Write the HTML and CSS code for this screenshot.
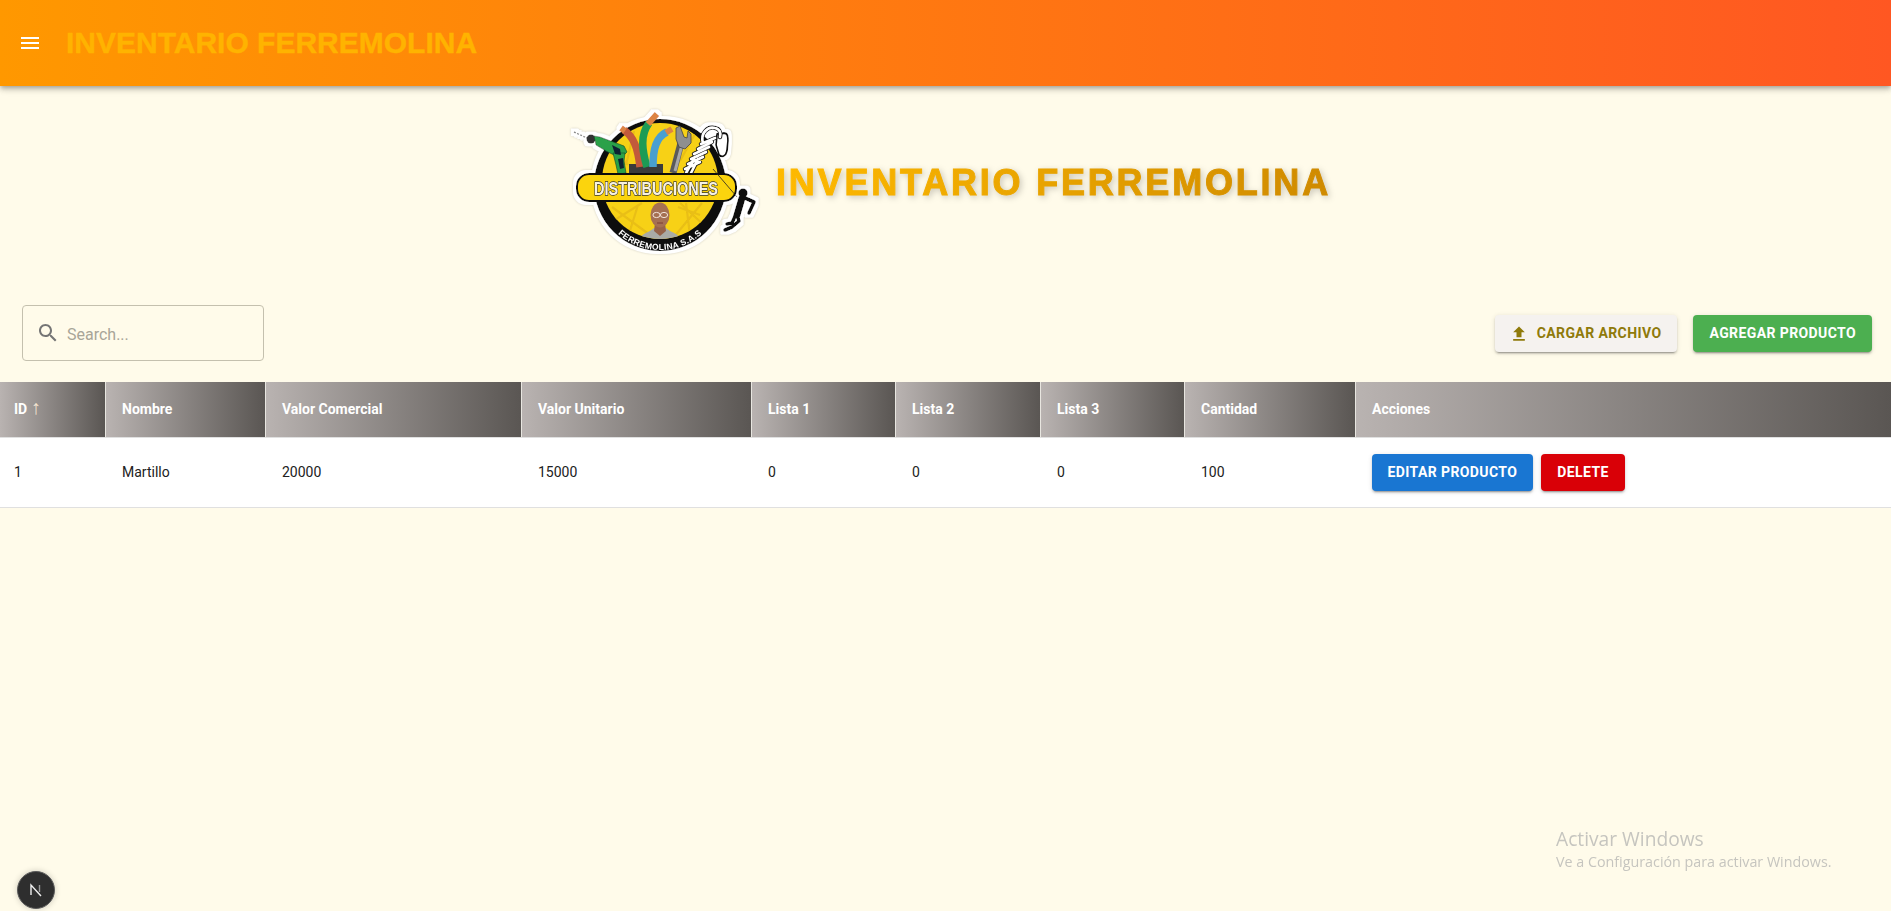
FILE: index.html
```html
<!DOCTYPE html>
<html lang="es">
<head>
<meta charset="utf-8">
<title>Inventario Ferremolina</title>
<link rel="stylesheet" href="styles.css">
</head>
<body>
<header class="appbar">
  <button class="menu-btn" aria-label="menu">
    <svg class="icon24" viewBox="0 0 24 24"><path d="M3 18h18v-2H3v2zm0-5h18v-2H3v2zm0-7v2h18V6H3z"/></svg>
  </button>
  <div class="appbar-title">INVENTARIO FERREMOLINA</div>
</header>

<section class="hero">
  <svg class="logo" viewBox="0 0 220 170" aria-label="Distribuciones Ferremolina">
    <defs>
      <path id="arc" d="M 60 130 A 62.5 62.5 0 0 0 160 130"/>
      <clipPath id="inner"><circle cx="110" cy="86" r="58"/></clipPath>
      <filter id="halo" x="-5%" y="-5%" width="110%" height="110%">
        <feMorphology in="SourceAlpha" operator="dilate" radius="3.2" result="grown"/>
        <feGaussianBlur in="grown" stdDeviation=".5" result="soft"/>
        <feFlood flood-color="#fff"/>
        <feComposite in2="soft" operator="in" result="white"/>
        <feMerge><feMergeNode in="white"/><feMergeNode in="SourceGraphic"/></feMerge>
      </filter>
    </defs>
    <g filter="url(#halo)">
      <circle cx="110" cy="90" r="66" fill="#111"/>
      <circle cx="110" cy="86" r="58" fill="#f7d117"/>
      <g clip-path="url(#inner)">
        <path class="rays" d="M62 112 L100 140 M60 128 L92 108 M78 142 L88 110 M130 108 L158 134 M124 142 L152 108 M140 140 L136 108 M150 120 L128 112 M84 36 L76 70 M60 50 L78 70 M130 66 L150 30"/>
        <path class="shirt" d="M88 146 C90 139 100 137 104 133 L116 133 C120 137 130 139 132 146Z"/>
      </g>
      <rect class="wire-base" x="79" y="69" width="34" height="11"/>
      <path class="wire wire-red" d="M90 72 C88 54 84 42 74 35"/>
      <path class="wire wire-green" d="M97 72 C92 55 90 40 99 28"/>
      <path class="wire wire-blue" d="M103 72 C103 54 106 42 117 37"/>
      <path class="wire-tip" d="M75 36 L71 33 M98 29 L107 19 M116 37.5 L122 34"/>
      <path class="wrench" d="M123 78 L131 48"/>
      <path class="wrench-line" d="M125 76 L132 50"/>
      <path class="wrench-head" d="M126 33 L130 31 L134 42 L137 43 L138 36 L141 39 L141 48 L135 54 L129 52 L126 44Z"/>
      <path class="drill-bit" d="M24 37 L37 43"/>
      <circle class="drill-chuck" cx="41" cy="44" r="4.5"/>
      <path class="drill" d="M44 41 L50 42 L74 51 L77 57 L72 62 L64 60 L56 56 L46 50Z"/>
      <path class="drill" d="M63 58 L75 58 L74 66 L76 78 L68 79 L66 70Z"/>
      <path class="drill-dark" d="M62 50 L70 54 L71 60 L65 59Z M68 64 L73 63 L74 73 L70 74Z"/>
      <path class="carabiner" d="M167 39 L174 38 C178 38 178 42 178 46 L177 56 C176 61 172 63 169 60 L166 50Z"/>
      <path class="coil-under" d="M153 48 C150 38 158 31 165 33 C170 34 171 38 170 42 M136 78 L144 64 M141 78 L148 64 M135 74 L150 67 M138 69 L153 62 M141 64 L156 57 M144 59 L159 52 M148 54 L162 47 M151 49 L165 43"/>
      <path class="coil-over" d="M153 48 C150 38 158 31 165 33 C170 34 171 38 170 42 M136 78 L144 64 M141 78 L148 64 M135 74 L150 67 M138 69 L153 62 M141 64 L156 57 M144 59 L159 52 M148 54 L162 47 M151 49 L165 43"/>
      <rect class="banner" x="27" y="79" width="159" height="27" rx="12"/>
      <path class="line" d="M163 74 L187 102"/>
      <text class="banner-text" x="106" y="100" text-anchor="middle" textLength="124" lengthAdjust="spacingAndGlyphs">DISTRIBUCIONES</text>
      <path class="skin-neck" d="M105 128 L115 128 L116 136 L110 141 L104 136Z"/>
      <ellipse class="skin" cx="110" cy="120" rx="9.5" ry="12.5"/>
      <path class="mouth" d="M107 128 H113"/>
      <ellipse class="glasses" cx="106.5" cy="120" rx="3.6" ry="2.6"/>
      <ellipse class="glasses" cx="114" cy="120" rx="3.6" ry="2.6"/>
      <text class="arc-text"><textPath href="#arc" startOffset="50%" text-anchor="middle">FERREMOLINA S.A.S</textPath></text>
      <circle class="climber-fill" cx="193" cy="98" r="4.6"/>
      <path class="climber-body" d="M192 103 L187 120"/>
      <path class="climber-limb" d="M195 103 L204 107 L199 118 M187 120 L189 126 L182 132 L175 135 M186 119 L182 128 L177 129"/>
    </g>
  </svg>
  <h1 class="hero-title">
    <svg class="hero-svg" viewBox="0 0 560 50">
      <defs>
        <linearGradient id="titleGrad" x1="0" y1="0" x2="1" y2="0">
          <stop offset="0" stop-color="#ffba00"/>
          <stop offset="1" stop-color="#cf8a00"/>
        </linearGradient>
      </defs>
      <text class="hero-text" x="0" y="40" fill="url(#titleGrad)" stroke="url(#titleGrad)">INVENTARIO FERREMOLINA</text>
    </svg>
  </h1>
</section>

<section class="toolbar">
  <label class="search">
    <svg class="icon24 search-icon" viewBox="0 0 24 24"><path d="M15.5 14h-.79l-.28-.27C15.41 12.59 16 11.11 16 9.5 16 5.91 13.09 3 9.5 3S3 5.91 3 9.5 5.91 16 9.5 16c1.61 0 3.09-.59 4.23-1.57l.27.28v.79l5 4.99L20.49 19l-4.99-5zm-6 0C7.01 14 5 11.99 5 9.5S7.01 5 9.5 5 14 7.01 14 9.5 11.99 14 9.5 14z"/></svg>
    <input class="search-input" type="text" placeholder="Search...">
  </label>
  <div class="toolbar-actions">
    <button class="btn btn-upload">
      <svg class="icon-upload" viewBox="0 0 24 24"><path d="M9 16h6v-6h4l-7-7-7 7h4v6zm-4 2h14v2H5v-2z"/></svg>
      Cargar archivo
    </button>
    <button class="btn btn-green">Agregar producto</button>
  </div>
</section>

<table class="grid">
  <thead>
    <tr>
      <th class="c-id">ID <span class="sort">↑</span></th>
      <th class="c-name">Nombre</th>
      <th class="c-vc">Valor Comercial</th>
      <th class="c-vu">Valor Unitario</th>
      <th class="c-list">Lista 1</th>
      <th class="c-list-mid">Lista 2</th>
      <th class="c-list">Lista 3</th>
      <th class="c-qty">Cantidad</th>
      <th class="c-act">Acciones</th>
    </tr>
  </thead>
  <tbody>
    <tr>
      <td>1</td>
      <td>Martillo</td>
      <td>20000</td>
      <td>15000</td>
      <td>0</td>
      <td>0</td>
      <td>0</td>
      <td>100</td>
      <td class="cell-actions">
        <div class="row-actions">
          <button class="btn btn-blue">Editar producto</button>
          <button class="btn btn-red">Delete</button>
        </div>
      </td>
    </tr>
  </tbody>
</table>

<div class="next-badge">
  <svg class="next-mark" viewBox="0 0 20 20"><path class="next-n" d="M5 15 V5 L15 16"/><path class="next-r" d="M13.5 5 V12"/></svg>
</div>
<div class="activate">
  <div class="activate-title">Activar Windows</div>
  <div class="activate-sub">Ve a Configuración para activar Windows.</div>
</div>
</body>
</html>
```

FILE: styles.css
```css
* { box-sizing: border-box; }
html, body { margin: 0; height: 100%; }
body {
  background: #fffbea;
  font-family: Roboto, "Liberation Sans", sans-serif;
  color: #212121;
  overflow: hidden;
}

/* App bar */
.appbar {
  height: 86px;
  display: flex;
  align-items: center;
  gap: 16px;
  padding: 0 10px;
  background: linear-gradient(90deg, #ff9800, #ff5722);
  box-shadow: 0 2px 4px -1px rgba(0,0,0,.2), 0 4px 5px rgba(0,0,0,.14), 0 1px 10px rgba(0,0,0,.12);
  position: relative;
}
.menu-btn {
  width: 40px;
  height: 40px;
  padding: 8px;
  border: 0;
  background: none;
  fill: #fff;
}
.icon24 { width: 24px; height: 24px; display: block; }
.appbar-title {
  font: 700 30px/1 "Liberation Sans", Arial, sans-serif;
  color: #ffb300;
  -webkit-text-stroke: .4px #ffb300;
}

/* Hero */
.hero {
  height: 200px;
  display: flex;
  align-items: flex-start;
  justify-content: center;
  padding: 9px 5px 0 0;
  gap: 6px;
}
.logo {
  width: 220px;
  height: 170px;
  flex: none;
  filter: blur(.35px) drop-shadow(0 0 1px rgba(0,0,0,.18));
}
.hero-title { margin: 60px 0 0; font-size: 0; }
.hero-svg {
  display: block;
  width: 560px;
  height: 50px;
  overflow: visible;
  filter: drop-shadow(2px 2px 3px rgba(0,0,0,.2));
}
.hero-text {
  font: 700 36px "Liberation Sans", Arial, sans-serif;
  letter-spacing: 2.8px;
  stroke-width: 1px;
}

/* Logo parts */
.rays { fill: none; stroke: #e9bf12; stroke-width: 2.2; }
.wire-base { fill: #3a3a3a; }
.wire { fill: none; stroke-width: 7.5; }
.wire-red { stroke: #c25a3a; }
.wire-green { stroke: #1f9b55; }
.wire-blue { stroke: #4a9fd0; }
.wire-tip { stroke: #dd8445; stroke-width: 6; fill: none; }
.wrench { stroke: #5a5a5a; stroke-width: 7; }
.wrench-line { stroke: #a8a8a8; stroke-width: 3; }
.wrench-head { fill: #8f8f8f; stroke: #444; stroke-width: .8; }
.drill-bit { stroke: #8a8a8a; stroke-width: 1.4; stroke-dasharray: 2 1.4; }
.drill-chuck { fill: #333; }
.drill { fill: #2aa14a; stroke: #0f4a26; stroke-width: .6; }
.drill-dark { fill: #123; }
.carabiner { fill: #fff; stroke: #111; stroke-width: 1.8; }
.coil-under { fill: none; stroke: #111; stroke-width: 4.4; stroke-linecap: round; }
.coil-over { fill: none; stroke: #fff; stroke-width: 2.7; stroke-linecap: round; }
.line { stroke: #222; stroke-width: .8; }
.banner { fill: #fbd40f; stroke: #111; stroke-width: 2; }
.banner-text {
  font: 700 18px "Liberation Sans", Arial, sans-serif;
  fill: #f7f2e2;
  stroke: #333;
  stroke-width: 1.3;
  paint-order: stroke;
}
.arc-text {
  font: 700 8.5px "Liberation Sans", Arial, sans-serif;
  letter-spacing: .3px;
  fill: #fff;
}
.skin { fill: #a56f52; }
.skin-neck { fill: #96634a; }
.mouth { stroke: #7d4034; stroke-width: 1; }
.shirt { fill: #a9aba6; }
.glasses { fill: none; stroke: #f2e4da; stroke-width: 1; }
.climber-fill { fill: #111; }
.climber-body { stroke: #111; stroke-width: 7; stroke-linecap: round; }
.climber-limb { fill: none; stroke: #111; stroke-width: 3.6; stroke-linecap: round; stroke-linejoin: round; }

/* Toolbar */
.toolbar {
  display: flex;
  align-items: flex-start;
  justify-content: space-between;
  padding: 19px 19px 21px 22px;
}
.search {
  width: 242px;
  height: 56px;
  display: flex;
  align-items: center;
  gap: 7px;
  padding: 0 13px;
  border: 1px solid #c4c0ae;
  border-radius: 4px;
  fill: #757575;
}
.search-icon { flex: none; }
.search-input {
  border: 0;
  outline: 0;
  background: none;
  min-width: 0;
  width: 100%;
  padding: 2px 0 0;
  font: 400 16px Roboto, sans-serif;
  color: #333;
}
.search-input::placeholder { color: #a8a598; opacity: 1; }
.toolbar-actions { display: flex; gap: 16px; padding-top: 10px; }

/* Buttons */
.btn {
  height: 37px;
  padding: 0 16px;
  border: 0;
  border-radius: 4px;
  font: 700 14px/1.75 Roboto, sans-serif;
  letter-spacing: .4px;
  text-transform: uppercase;
  white-space: nowrap;
  display: inline-flex;
  align-items: center;
  box-shadow: 0 3px 1px -2px rgba(0,0,0,.2), 0 2px 2px rgba(0,0,0,.14), 0 1px 5px rgba(0,0,0,.12);
}
.btn-upload { background: #f5f2ef; color: #8f7a0a; fill: #8f7a0a; }
.icon-upload { width: 20px; height: 20px; margin: 0 8px 0 -2px; }
.btn-green { background: #4caf50; color: #fff; }
.btn-blue { background: #1976d2; color: #fff; padding: 0 15.5px; }
.btn-red { background: #d90007; color: #fff; padding: 0 16.5px; }

/* Table */
.grid {
  width: 100%;
  border-collapse: separate;
  border-spacing: 0;
  table-layout: fixed;
  font-size: 14px;
}
.grid th {
  height: 56px;
  padding: 0 16px 2px;
  text-align: left;
  font-weight: 700;
  color: #fff;
  background: linear-gradient(90deg, #b9b3b1, #5a5653);
  border-right: 1px solid #e8e6e0;
  border-bottom: 1px solid #e0e0e0;
}
.grid th:first-child, .grid td:first-child { padding-left: 14px; }
.grid th:last-child { border-right: 0; }
.grid td {
  height: 70px;
  padding: 0 16px 2px;
  background: #fff;
  border-bottom: 1px solid #e0e0e0;
}
.grid .cell-actions { padding-bottom: 0; }
.sort { color: #f3e4d0; font: 400 20px/0 "Liberation Sans", sans-serif; }
.c-id { width: 106px; }
.c-name { width: 160px; }
.c-vc { width: 256px; }
.c-vu { width: 230px; }
.c-list { width: 144px; }
.c-list-mid { width: 145px; }
.c-qty { width: 171px; }
.row-actions { display: flex; gap: 8px; }

/* Overlays */
.next-badge {
  position: fixed;
  left: 17px;
  bottom: 2px;
  width: 38px;
  height: 38px;
  border-radius: 50%;
  background: #2e2e2e;
  border: 1px solid #5a5a5a;
  box-shadow: 0 0 6px rgba(0,0,0,.2);
  display: flex;
  align-items: center;
  justify-content: center;
}
.next-mark { width: 20px; height: 20px; fill: none; }
.next-n { stroke: #eee; stroke-width: 1.4; }
.next-r { stroke: #999; stroke-width: 1.4; }
.activate {
  position: fixed;
  left: 1556px;
  top: 826px;
  color: #c6c5bf;
  font-family: "Open Sans", sans-serif;
  pointer-events: none;
}
.activate-title { font-size: 19.2px; line-height: 26px; }
.activate-sub { font-size: 14.3px; line-height: 20px; }
```
